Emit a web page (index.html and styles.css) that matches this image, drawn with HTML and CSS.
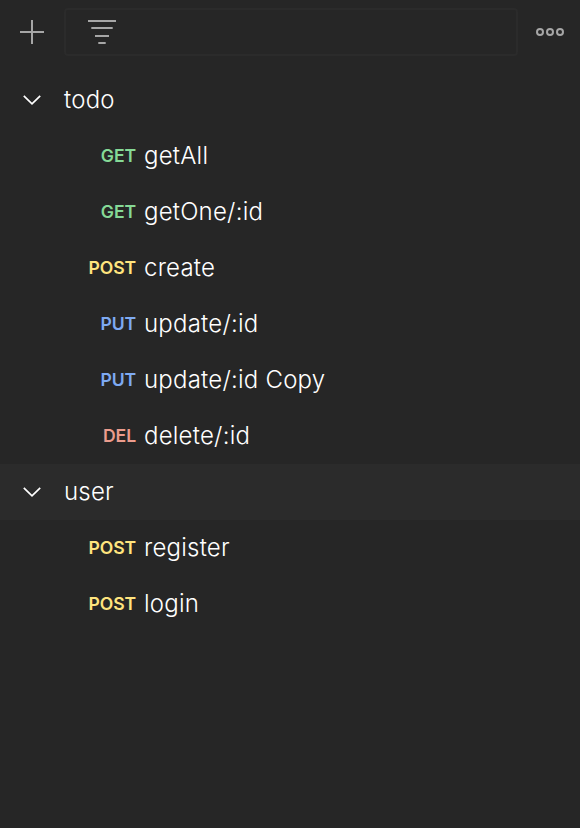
FILE: index.html
```html
<!DOCTYPE html>
<html lang="en">
<head>
<meta charset="utf-8">
<title>Collections</title>
<link rel="stylesheet" href="styles.css">
</head>
<body>
<header class="toolbar">
  <svg class="icon-add" width="24" height="24" viewBox="0 0 24 24"><path d="M12 0V24M0 12H24"/></svg>
  <div class="filter">
    <svg width="28" height="24" viewBox="0 0 28 24"><path d="M0 1H28M3.3 8H24.7M7 16H21M10.3 23H17.7"/></svg>
  </div>
  <svg class="icon-more" width="28" height="8" viewBox="0 0 28 8"><circle cx="4" cy="4" r="3"/><circle cx="14" cy="4" r="3"/><circle cx="24" cy="4" r="3"/></svg>
</header>
<main class="tree">
  <div class="row folder">
    <svg class="chevron" width="18" height="10" viewBox="0 0 18 10"><path d="M.8 .8L9 8.8L17.2 .8"/></svg>
    <span class="name">todo</span>
  </div>
  <div class="row"><span class="method get">GET</span><span class="name">getAll</span></div>
  <div class="row"><span class="method get">GET</span><span class="name">getOne/:id</span></div>
  <div class="row"><span class="method post">POST</span><span class="name">create</span></div>
  <div class="row"><span class="method put">PUT</span><span class="name">update/:id</span></div>
  <div class="row"><span class="method put">PUT</span><span class="name">update/:id Copy</span></div>
  <div class="row"><span class="method del">DEL</span><span class="name">delete/:id</span></div>
  <div class="row folder hovered">
    <svg class="chevron" width="18" height="10" viewBox="0 0 18 10"><path d="M.8 .8L9 8.8L17.2 .8"/></svg>
    <span class="name">user</span>
  </div>
  <div class="row"><span class="method post">POST</span><span class="name">register</span></div>
  <div class="row"><span class="method post">POST</span><span class="name">login</span></div>
</main>
</body>
</html>
```
FILE: styles.css
```css
* { box-sizing: border-box; }
body {
  margin: 0;
  min-height: 100vh;
  background: #262626;
  color: #fff;
  font-family: Inter, "Liberation Sans", sans-serif;
}
svg { display: block; flex: none; fill: none; stroke: #a6a6a6; stroke-width: 2; }
.toolbar {
  display: flex;
  align-items: center;
  height: 64px;
  padding: 0 16px 0 20px;
}
.filter {
  flex: 1;
  display: flex;
  align-items: center;
  height: 48px;
  margin: 0 18px 0 20px;
  padding-left: 22px;
  border: 2px solid #2b2b2b;
  border-radius: 4px;
}
.tree { padding-top: 8px; }
.row {
  display: flex;
  align-items: center;
  height: 56px;
  line-height: 32px;
}
.name { font-size: 24px; font-weight: 360; letter-spacing: 0.22px; white-space: nowrap; }
.folder { padding-left: 23px; }
.folder .name { margin-left: 23px; }
.hovered { background: #2b2b2b; }
.chevron { stroke: #fff; stroke-width: 1.7; }
.method {
  width: 136px;
  margin-right: 8px;
  text-align: right;
  font-size: 17.6px;
  font-weight: 600;
  letter-spacing: -0.1px;
}
.get { color: #85d996; }
.post { color: #ffe47e; }
.put { color: #7eaaf2; }
.del { color: #ec9c8d; }
```
